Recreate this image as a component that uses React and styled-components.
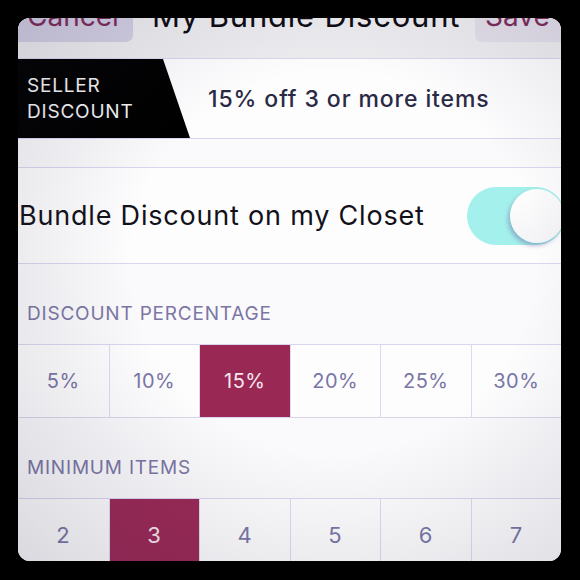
import styled, { createGlobalStyle } from "styled-components";

const GlobalStyles = createGlobalStyle`
  html, body {
    margin: 0;
    padding: 0;
    background: #000;
  }
  body {
    font-family: Inter, Lato, Arial, sans-serif;
  }
`;

const Frame = styled.div`
  width: 580px;
  height: 580px;
  padding: 18px;
  box-sizing: border-box;
  background: #000;
`;

const Screen = styled.div`
  position: relative;
  width: 543px;
  height: 543px;
  border-radius: 12px;
  overflow: hidden;
  background: #fafafc;

  &::after {
    content: "";
    position: absolute;
    inset: 0;
    pointer-events: none;
    background: radial-gradient(
      ellipse at 58% 45%,
      rgba(0, 0, 0, 0) 45%,
      rgba(40, 40, 70, 0.17) 100%
    );
  }
`;

const HeaderBar = styled.header`
  margin-top: -20px;
  padding-bottom: 16px;
  background: #ededf0;
`;

const HeaderRow = styled.div`
  display: flex;
  align-items: stretch;
  height: 44px;
`;

const NavButton = styled.div`
  display: flex;
  align-items: flex-end;
  width: ${({ $width }) => $width}px;
  padding: 0 0 11px ${({ $pad }) => $pad}px;
  box-sizing: border-box;
  background: ${({ $bg }) => $bg};
  border-radius: ${({ $side }) => ($side === "left" ? "0 0 7px 0" : "0 0 0 7px")};
  color: #7d2b5b;
  font-size: 28px;
  line-height: 30px;
`;

const Title = styled.div`
  flex: 1;
  display: flex;
  align-items: flex-end;
  padding: 0 0 11px 19px;
  color: #0c0b12;
  font-size: 31px;
  line-height: 30px;
  letter-spacing: 0.8px;
`;

const Cell = styled.div`
  display: flex;
  align-items: center;
  height: ${({ $h }) => $h}px;
  box-sizing: border-box;
  border-top: 1px solid #dbd5ef;
  border-bottom: 1px solid #dbd5ef;
  background: #fdfdfe;
`;

const Tag = styled.div`
  display: flex;
  flex-direction: column;
  justify-content: center;
  align-self: stretch;
  width: 172px;
  padding: 1px 0 0 9px;
  box-sizing: border-box;
  background: #000;
  clip-path: polygon(0 0, 145px 0, 172px 100%, 0 100%);
  color: #f4f4f6;
  font-size: 19px;
  line-height: 26px;
  letter-spacing: 0.8px;
`;

const Summary = styled.div`
  margin-left: 18px;
  color: #2b2a45;
  font-size: 23px;
  font-weight: 500;
  letter-spacing: 0.9px;
`;

const Band = styled.div`
  height: 28px;
`;

const ToggleLabel = styled.div`
  flex: 1;
  padding-left: 1px;
  color: #121119;
  font-size: 27px;
  letter-spacing: 0.8px;
`;

const Toggle = styled.div`
  position: relative;
  width: 98px;
  height: 58px;
  margin-right: -4px;
  border-radius: 29px;
  background: #a4f0ec;
`;

const Knob = styled.div`
  position: absolute;
  top: 2px;
  right: 1px;
  width: 54px;
  height: 54px;
  border-radius: 50%;
  background: linear-gradient(160deg, #ffffff 0%, #f2f2f5 100%);
  box-shadow: -2px 3px 4px rgba(90, 70, 140, 0.35);
`;

const SectionTitle = styled.div`
  display: flex;
  align-items: flex-end;
  height: 80px;
  padding: 0 0 19px 9px;
  box-sizing: border-box;
  color: #7b76a4;
  font-size: 19px;
  line-height: 22px;
  letter-spacing: 0.8px;
`;

const Segments = styled.div`
  display: grid;
  grid-template-columns: repeat(6, 1fr);
  height: 74px;
  box-sizing: border-box;
  border-top: 1px solid #dbd5ef;
  border-bottom: 1px solid #dbd5ef;
  background: #fdfdfe;
`;

const Segment = styled.div`
  display: flex;
  align-items: center;
  justify-content: center;
  border-left: 1px solid #dfd9f0;
  background: ${({ $active }) => ($active ? "#9a2855" : "transparent")};
  color: ${({ $active }) => ($active ? "#f7e6ef" : "#7a76a6")};
  font-size: ${({ $size }) => $size}px;
  letter-spacing: 0.5px;

  &:first-child {
    border-left: none;
  }
`;

const percentages = ["5%", "10%", "15%", "20%", "25%", "30%"];
const minimums = ["2", "3", "4", "5", "6", "7"];

export default function App() {
  const percent = "15%";
  const minItems = "3";

  return (
    <>
      <GlobalStyles />
      <Frame>
        <Screen>
          <HeaderBar>
            <HeaderRow>
              <NavButton $side="left" $width={115} $pad={9} $bg="#d3cfe4">
                Cancel
              </NavButton>
              <Title>My Bundle Discount</Title>
              <NavButton $side="right" $width={86} $pad={10} $bg="#e3dfea">
                Save
              </NavButton>
            </HeaderRow>
          </HeaderBar>

          <Cell $h={81}>
            <Tag>
              <span>SELLER</span>
              <span>DISCOUNT</span>
            </Tag>
            <Summary>15% off 3 or more items</Summary>
          </Cell>

          <Band />

          <Cell $h={97}>
            <ToggleLabel>Bundle Discount on my Closet</ToggleLabel>
            <Toggle>
              <Knob />
            </Toggle>
          </Cell>

          <SectionTitle>DISCOUNT PERCENTAGE</SectionTitle>
          <Segments>
            {percentages.map((p) => (
              <Segment key={p} $size={20} $active={p === percent}>
                {p}
              </Segment>
            ))}
          </Segments>

          <SectionTitle>MINIMUM ITEMS</SectionTitle>
          <Segments>
            {minimums.map((m) => (
              <Segment key={m} $size={22} $active={m === minItems}>
                {m}
              </Segment>
            ))}
          </Segments>
        </Screen>
      </Frame>
    </>
  );
}
